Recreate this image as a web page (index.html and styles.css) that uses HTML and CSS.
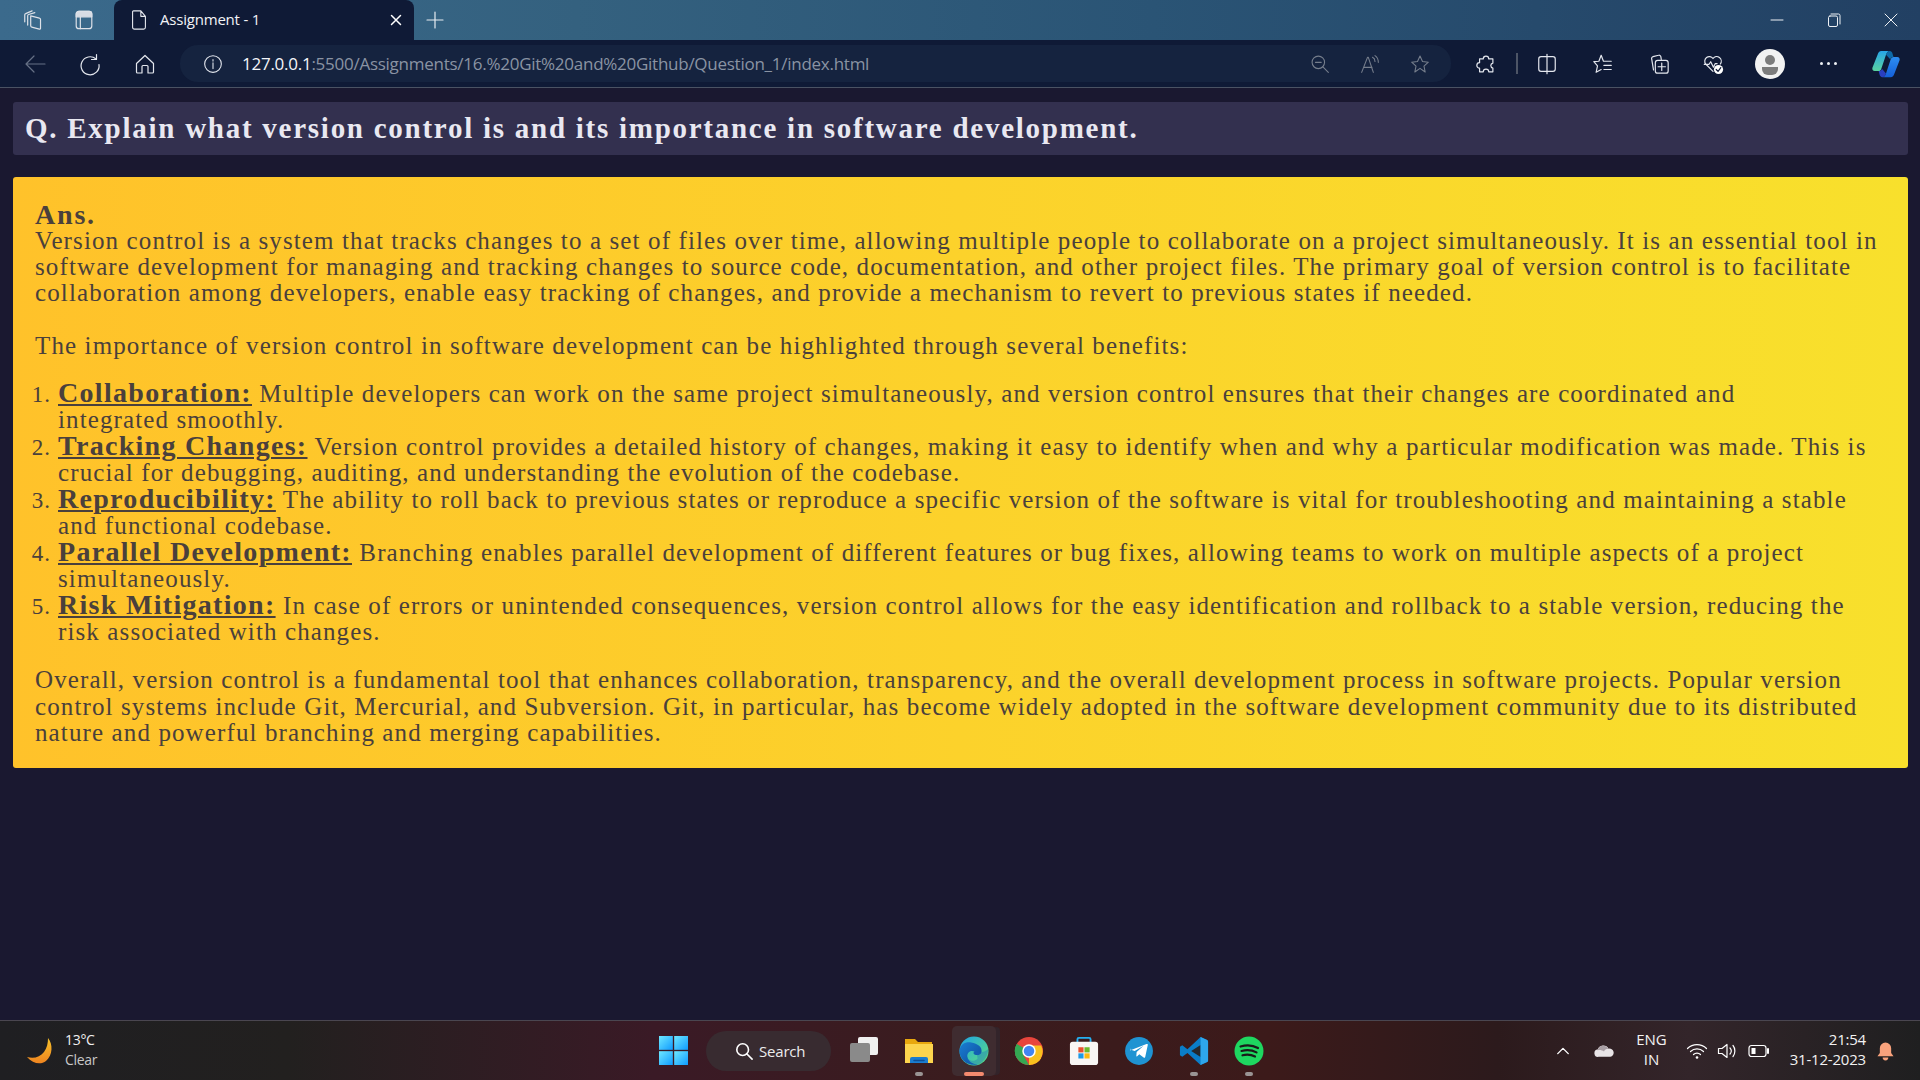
FILE: index.html
```html
<!DOCTYPE html>
<html lang="en">
<head>
<meta charset="utf-8">
<title>Assignment - 1</title>
<link rel="stylesheet" href="styles.css">
</head>
<body>
<header class="tabstrip">
  <div class="tabstrip-left">
    <svg class="ic22" viewBox="0 0 24 24"><path d="M9.500 7.500l9.500 2.500a1.500 1.500 0 0 1 1.200 1.500v9.500a1 1 0 0 1-1.300 1l-8.200-2.300a1.500 1.500 0 0 1-1.200-1.500z"/><path d="M6.200 17.500V7.500a1.500 1.500 0 0 1 1-1.500L14 4"/><path d="M3 14V6.500a1.500 1.500 0 0 1 1-1.500l7-3"/></svg>
    <svg class="ic22" viewBox="0 0 24 24"><rect x="3.500" y="2.500" width="17" height="19" rx="3"/><path d="M8 8.500V21.500"/><path d="M3.500 5.500a3 3 0 0 1 3-3h11a3 3 0 0 1 3 3V8.500h-17z" fill="#d8dce4"/></svg>
  </div>
  <div class="tab">
    <svg class="ic20" viewBox="0 0 24 24"><path d="M6 2h8l5 6v12a2 2 0 0 1-2 2H7a2 2 0 0 1-2-2V3a1 1 0 0 1 1-1zM14 2v6h5"/></svg>
    <span class="tab-title">Assignment - 1</span>
    <svg class="ic-close" viewBox="0 0 12 12"><path d="M1.500 1.500l9 9M10.500 1.500l-9 9"/></svg>
  </div>
  <svg class="newtab" viewBox="0 0 18 18"><path d="M9 1v16M1 9h16"/></svg>
  <div class="winctl">
    <svg class="ic16" viewBox="0 0 16 16"><path d="M2 8h12"/></svg>
    <svg class="ic16" viewBox="0 0 16 16"><rect x="2.500" y="4" width="9" height="10.500" rx="1.500"/><path d="M5 2h7.500a1.500 1.500 0 0 1 1.500 1.500V12"/></svg>
    <svg class="ic16" viewBox="0 0 16 16"><path d="M2 2l12 12M14 2L2 14"/></svg>
  </div>
</header>
<nav class="toolbar">
  <div class="nav-group">
    <svg class="nav-ic dim" viewBox="0 0 24 24"><path d="M22 12H3M11 4l-8 8 8 8"/></svg>
    <svg class="nav-ic" viewBox="0 0 24 24"><path d="M18.500 2.500V7.500h-5"/><path d="M18 7a9 9 0 1 0 3 5.500"/></svg>
    <svg class="nav-ic" viewBox="0 0 24 24"><path d="M3.500 11.500L12 3.500l8.500 8V20a1 1 0 0 1-1 1H15v-6.500a1 1 0 0 0-1-1h-4a1 1 0 0 0-1 1V21H4.500a1 1 0 0 1-1-1z"/></svg>
  </div>
  <div class="address">
    <svg class="addr-info" viewBox="0 0 24 24"><circle cx="12" cy="12" r="10"/><path d="M12 10.500V17.500M12 6.500v2"/></svg>
    <span class="url"><b>127.0.0.1</b>:5500/Assignments/16.%20Git%20and%20Github/Question_1/index.html</span>
    <div class="addr-tools">
      <svg class="addr-ic" viewBox="0 0 24 24"><circle cx="10" cy="10" r="7.500"/><path d="M15.500 15.500l6.500 6.500M6.500 10h7"/></svg>
      <svg class="addr-ic" viewBox="0 0 24 24"><path d="M2 22L9 4h1l6 18M4.500 16h10M15 4c2 1 3 3 3 5M18 2c3 2 4 5 4 8"/></svg>
      <svg class="addr-ic" viewBox="0 0 24 24"><path d="M12 2.500l3 6.500 7 .8-5.200 4.800 1.400 7L12 17.200 5.800 21.600l1.400-7L2 9.800 9 9z"/></svg>
    </div>
  </div>
  <div class="toolbar-right">
    <svg class="tb-ic" viewBox="0 0 24 24"><path d="M5 6.500h4a3 3 0 0 1 6 0h4.500v4.500a2.800 2.800 0 0 0 0 5.500v4h-4.500a3 3 0 0 0-6 0H5v-4a3 3 0 0 1 0-6z"/></svg>
    <span class="tb-sep"></span>
    <svg class="tb-ic split" viewBox="0 0 24 24"><rect x="3" y="4" width="18" height="16" rx="2.500"/><path d="M12 1.500v21"/></svg>
    <svg class="tb-ic favs" viewBox="0 0 24 24"><path d="M10 2.500l2.500 6.500H21M13 13.500h8M13 18h8M10 2.500L7.500 9 2 9.500l4 4.500-1.500 7 5.500-3"/></svg>
    <svg class="tb-ic colls" viewBox="0 0 24 24"><path d="M6 18.500L4 6.500a2 2 0 0 1 1.500-2.500l6-1.500a2 2 0 0 1 2.500 1.500l.5 3"/><rect x="8" y="8" width="14" height="14" rx="2.500"/><path d="M15 11v8M11 15h8"/></svg>
    <svg class="tb-ic health" viewBox="0 0 24 24"><path d="M12 20L4 12a5 5 0 0 1 8-6 5 5 0 0 1 8 6M2.500 12.500h5l2-3 3 6 2-4h2"/><circle cx="18" cy="18" r="5" fill="#fff" stroke="none"/><path d="M15.500 18l2 2 3-4" stroke="#0f1a36"/></svg>
    <span class="avatar"><svg viewBox="0 0 30 30"><circle cx="15" cy="11" r="5" fill="#7c7c7c"/><path d="M7 18h16v2a6 6 0 0 1-6 6h-4a6 6 0 0 1-6-6z" fill="#7c7c7c"/></svg></span>
    <span class="dots"><i></i><i></i><i></i></span>
    <svg class="copilot" viewBox="0 0 32 32">
      <defs>
        <linearGradient id="cpa" x1="0" y1="0" x2="0" y2="1"><stop offset="0" stop-color="#27a5e8"/><stop offset="1" stop-color="#5ad3a0"/></linearGradient>
        <linearGradient id="cpb" x1="0" y1="0" x2="0" y2="1"><stop offset="0" stop-color="#2d8df0"/><stop offset="1" stop-color="#1560d8"/></linearGradient>
      </defs>
      <path d="M11 2h9c-2 0-3 1.500-4 4l-5 15c-.5 1.500-1.500 2.500-3 2.500H4c-2 0-3-1.500-2.500-3.500L7 6c.7-2.500 2-4 4-4z" fill="url(#cpa)"/>
      <path d="M21 30h-9c2 0 3-1.500 4-4l5-15c.5-1.500 1.500-2.500 3-2.500h4c2 0 3 1.500 2.500 3.500L25 26c-.7 2.500-2 4-4 4z" fill="url(#cpb)"/>
      <path d="M16 6c1-2.500 2-4 4-4 1.500 0 2.500 1 3 3l1 3.500c-2 0-3 1-3.500 2.500z" fill="#0e6aa8"/>
      <path d="M16 26c-1 2.500-2 4-4 4-1.500 0-2.500-1-3-3l-.8-3.500c2 0 3-1 3.500-2.500z" fill="#2a3fc0"/>
    </svg>
  </div>
</nav>
<main class="page">
  <h1 class="question">Q. Explain what version control is and its importance in software development.</h1>
  <section class="answer">
    <div class="ans">Ans.</div>
    <p class="para">Version control is a system that tracks changes to a set of files over time, allowing multiple people to collaborate on a project simultaneously. It is an essential tool in<br>software development for managing and tracking changes to source code, documentation, and other project files. The primary goal of version control is to facilitate<br>collaboration among developers, enable easy tracking of changes, and provide a mechanism to revert to previous states if needed.</p>
    <p class="para gap">The importance of version control in software development can be highlighted through several benefits:</p>
    <ol class="list">
      <li><strong>Collaboration:</strong> Multiple developers can work on the same project simultaneously, and version control ensures that their changes are coordinated and<br>integrated smoothly.</li>
      <li><strong>Tracking Changes:</strong> Version control provides a detailed history of changes, making it easy to identify when and why a particular modification was made. This is<br>crucial for debugging, auditing, and understanding the evolution of the codebase.</li>
      <li><strong>Reproducibility:</strong> The ability to roll back to previous states or reproduce a specific version of the software is vital for troubleshooting and maintaining a stable<br>and functional codebase.</li>
      <li><strong>Parallel Development:</strong> Branching enables parallel development of different features or bug fixes, allowing teams to work on multiple aspects of a project<br>simultaneously.</li>
      <li><strong>Risk Mitigation:</strong> In case of errors or unintended consequences, version control allows for the easy identification and rollback to a stable version, reducing the<br>risk associated with changes.</li>
    </ol>
    <p class="para">Overall, version control is a fundamental tool that enhances collaboration, transparency, and the overall development process in software projects. Popular version<br>control systems include Git, Mercurial, and Subversion. Git, in particular, has become widely adopted in the software development community due to its distributed<br>nature and powerful branching and merging capabilities.</p>
  </section>
</main>
<footer class="taskbar">
  <div class="weather">
    <svg class="moon" viewBox="0 0 28 28">
      <defs><linearGradient id="mn" x1="0" y1="0" x2="0" y2="1"><stop offset="0" stop-color="#f7c22a"/><stop offset="1" stop-color="#ee8420"/></linearGradient></defs>
      <path d="M22 1c5 6 5 17-2 23-5 4-13 3-19-4 7 2 13 0 17-5 3-4 4-9 4-14z" fill="url(#mn)"/>
    </svg>
    <div class="weather-text"><span>13°C</span><span class="clear">Clear</span></div>
  </div>
  <div class="task-center">
    <svg class="tk-start" viewBox="0 0 30 30">
      <defs><linearGradient id="wn" x1="0" y1="0" x2="1" y2="1"><stop offset="0" stop-color="#6ee8ff"/><stop offset="1" stop-color="#0f9bff"/></linearGradient></defs>
      <rect x="0" y="0" width="14.300" height="14.300" fill="url(#wn)"/><rect x="15.700" y="0" width="14.300" height="14.300" fill="url(#wn)"/><rect x="0" y="15.700" width="14.300" height="14.300" fill="url(#wn)"/><rect x="15.700" y="15.700" width="14.300" height="14.300" fill="url(#wn)"/>
    </svg>
    <div class="search">
      <svg class="search-ic" viewBox="0 0 20 20"><circle cx="8.500" cy="8.500" r="6.500"/><path d="M13 13l6 6"/></svg>
      <span>Search</span>
    </div>
    <svg class="tk-view" viewBox="0 0 30 30"><rect x="9" y="1" width="20" height="18" rx="2" fill="#f0f0f0"/><rect x="1" y="7" width="20" height="19" rx="2" fill="#8a8a8a"/></svg>
    <div class="tk-app run">
      <svg viewBox="0 0 30 28"><path d="M1 2h10l3 3h14v21H1z" fill="#e8a80e"/><path d="M1 7h28v19H1z" fill="#fcd54e"/><path d="M6 22a2 2 0 0 1 2-2h14a2 2 0 0 1 2 2v4H6z" fill="#1a7dd0"/><path d="M10 23.500h10" stroke="#0c4f96" stroke-width="1.500"/></svg>
    </div>
    <div class="tk-app active">
      <svg viewBox="0 0 32 32">
        <defs>
          <linearGradient id="eg1" x1="0" y1="0" x2="1" y2="1"><stop offset="0" stop-color="#1da3e8"/><stop offset="1" stop-color="#5fe07a"/></linearGradient>
          <linearGradient id="eg2" x1="0" y1="0" x2="1" y2="1"><stop offset="0" stop-color="#1a7fd2"/><stop offset="1" stop-color="#0d4a9c"/></linearGradient>
        </defs>
        <circle cx="16" cy="16" r="15.500" fill="url(#eg1)"/>
        <path d="M.5 16C1 8 8 6 13 7c7 1 12 5 11 10-.5 3-4 4-7 3-2-.6-2-3-.5-3.500-4-2-8.500 1-7.500 6 .8 4 5 8 11 8C9 32 1 26 .5 16z" fill="url(#eg2)"/>
        <path d="M18 17c3 1.500 9 .5 12-2 2-2 1-1 1 1-1 9-9 15.500-15.500 15.500-5-1-8-5-7-10 0 4 7 7 11 3 1-1-1-6-1.500-7.500z" fill="#1666c0" opacity=".35"/>
      </svg>
    </div>
    <div class="tk-app">
      <svg viewBox="0 0 32 32">
        <circle cx="16" cy="16" r="15" fill="#e8453c"/>
        <path d="M16 16L29 23.500A15 15 0 0 1 16 31z" fill="#f9c01e"/>
        <path d="M16 16L3 23.500A15 15 0 0 1 3 8.500z" fill="#34a853"/>
        <path d="M16 10h13a15 15 0 0 1-2 16L16 31l5-8z" fill="#f9c01e"/>
        <path d="M3 8.500L11 22l5 9A15 15 0 0 1 3 8.500z" fill="#34a853"/>
        <circle cx="16" cy="16" r="7.200" fill="#fff"/><circle cx="16" cy="16" r="5.600" fill="#4285f4"/>
      </svg>
    </div>
    <div class="tk-app">
      <svg viewBox="0 0 30 32">
        <path d="M8 7V3.500A1.500 1.500 0 0 1 9.500 2h11A1.500 1.500 0 0 1 22 3.500V7" fill="none" stroke="#25b0f0" stroke-width="2"/>
        <rect y="6" width="30" height="25" rx="3" fill="#f8f6f4"/>
        <rect x="9" y="12" width="5.500" height="5.500" fill="#e8502e"/><rect x="15.500" y="12" width="5.500" height="5.500" fill="#6cba2c"/><rect x="9" y="18.500" width="5.500" height="5.500" fill="#1d9ae6"/><rect x="15.500" y="18.500" width="5.500" height="5.500" fill="#fcb912"/>
      </svg>
    </div>
    <div class="tk-app">
      <svg viewBox="0 0 28 28">
        <circle cx="14" cy="14" r="13" fill="#1f93d2"/>
        <path d="M5.500 13.500L21 7.500c.8-.3 1.400.1 1.200 1l-2.400 11c-.2.800-.8 1-1.500.6l-4-3-2 1.800c-.3.300-.8.300-.8-.2l.3-3.700 6.500-6-8.300 5-3.500-1.100c-.7-.3-.7-.9 0-1.400z" fill="#fff"/>
      </svg>
    </div>
    <div class="tk-app run">
      <svg viewBox="0 0 32 32">
        <path d="M23 1l7 3.300c.6.300 1 1 1 1.700v20c0 .7-.4 1.400-1 1.700L23 31 9 18l-5.500 4.200L1 20.500v-9L3.500 9.800 9 14z" fill="#0a7dc8"/>
        <path d="M23 9.500L13 16l10 6.500z" fill="#26282c"/>
        <path d="M23 1l7 3.300c.6.300 1 1 1 1.700v20c0 .7-.4 1.400-1 1.700L23 31z" fill="#2ea6ec"/>
      </svg>
    </div>
    <div class="tk-app run">
      <svg viewBox="0 0 30 30">
        <circle cx="15" cy="15" r="14.500" fill="#1ed760"/>
        <path class="sp" d="M6.500 10.500c6-1.800 12.500-1.300 17.500 1.500M7.500 15c5-1.400 10.500-1 15 1.400M8.500 19.300c4.300-1 8.500-.8 12.500 1.200"/>
      </svg>
    </div>
  </div>
  <div class="tray">
    <svg class="tray-chev" viewBox="0 0 16 10"><path d="M2 8l6-6 6 6"/></svg>
    <svg class="tray-cloud" viewBox="0 0 22 14"><path d="M5 14a4 4 0 0 1-1-8 6.500 6.500 0 0 1 12-1 4.500 4.500 0 0 1 2 9z" fill="#e8e4e6"/><path d="M4 7a6.500 6.500 0 0 1 12-2c-3 0-4 1-5 3-2-1-5-2-7-1z" fill="#a89ea4"/></svg>
    <div class="lang"><span>ENG</span><span>IN</span></div>
    <svg class="tray-ic" viewBox="0 0 22 18"><path d="M1.500 6.500a13.500 13.500 0 0 1 19 0M4.500 9.500a9.500 9.500 0 0 1 13 0M7.500 12.500a5 5 0 0 1 7 0"/><circle cx="11" cy="15.500" r="1.300" fill="#fff" stroke="none"/></svg>
    <svg class="tray-ic" viewBox="0 0 22 18"><path d="M1.500 6.500h3.500L10 2.500v13L5 11.500H1.500zM13 6c1.500 1.700 1.500 4.300 0 6M16 3.500c2.500 3 2.500 8 0 11"/></svg>
    <svg class="tray-ic" viewBox="0 0 22 18"><rect x="1" y="3.500" width="17" height="11" rx="2.500"/><rect x="3.500" y="6" width="4" height="6" fill="#fff" stroke="none"/><path d="M20 7v4" stroke-width="2"/></svg>
    <div class="clock"><span>21:54</span><span>31-12-2023</span></div>
    <svg class="tray-bell" viewBox="0 0 18 20"><path d="M9 1a6 6 0 0 1 6 6v5l2.500 3.500H.5L3 12V7a6 6 0 0 1 6-6z" fill="#f9a27c"/><path d="M6 17h6a3 3 0 0 1-6 0z" fill="#f9a27c"/></svg>
  </div>
</footer>
</body>
</html>
```
FILE: styles.css
```css
* { box-sizing: border-box; }
html, body { margin: 0; height: 100%; }
body {
  width: 1920px;
  height: 1080px;
  display: flex;
  flex-direction: column;
  overflow: hidden;
  background: #1a1830;
  font-family: "Open Sans", "Noto Sans", sans-serif;
  color: #fff;
}
svg { display: block; flex: none; fill: none; stroke: #e4e7ee; stroke-width: 1.500; stroke-linecap: round; stroke-linejoin: round; }

/* Tab strip */
.tabstrip {
  height: 40px;
  flex: none;
  display: flex;
  align-items: flex-end;
  background: linear-gradient(90deg, #3b6a8c 0%, #34617f 30%, #2a5475 60%, #224063 100%);
  padding-left: 22px;
}
.tabstrip-left { display: flex; gap: 29px; align-self: center; width: 92px; }
.ic22 { width: 22px; height: 22px; stroke: #dde1e8; stroke-width: 1.300; }
.tab {
  width: 300px;
  height: 40px;
  background: #0f1a36;
  border-radius: 8px 8px 0 0;
  display: flex;
  align-items: center;
  padding: 0 12px 0 14px;
}
.ic20 { width: 22px; height: 22px; stroke: #e4e7ee; stroke-width: 1.200; }
.tab-title { font-size: 15px; letter-spacing: -0.200px; margin-left: 10px; padding-bottom: 2px; flex: 1; color: #f2f3f6; }
.ic-close { width: 12px; height: 12px; stroke: #fff; }
.newtab { width: 18px; height: 18px; margin: 0 0 11px 12px; stroke: #e8edf2; stroke-width: 1.200; }
.winctl { margin-left: auto; display: flex; gap: 41px; align-self: center; padding-right: 21px; }
.ic16 { width: 16px; height: 16px; stroke: #eef1f5; stroke-width: 1; }

/* Toolbar */
.toolbar {
  height: 48px;
  flex: none;
  display: flex;
  align-items: center;
  background: #0f1a36;
  border-bottom: 1px solid #4a5263;
  padding-left: 23px;
}
.nav-group { display: flex; gap: 31px; margin-right: 23px; }
.nav-ic { width: 24px; height: 24px; stroke-width: 1.200; }
.nav-ic.dim { stroke: #667085; }
.address {
  width: 1271px;
  height: 37px;
  border-radius: 18px;
  background: #15233f;
  display: flex;
  align-items: center;
  padding-left: 23px;
}
.addr-info { width: 20px; height: 20px; stroke-width: 1.300; }
.url { margin-left: 19px; font-size: 17px; letter-spacing: -0.260px; color: #8a93a3; white-space: nowrap; }
.url b { font-weight: 400; color: #f4f6f9; }
.addr-tools { margin-left: auto; margin-right: 21px; display: flex; gap: 30px; }
.addr-ic { width: 20px; height: 20px; stroke: #767e8c; stroke-width: 1.300; }
.toolbar-right { display: flex; align-items: center; margin-left: 24px; }
.tb-ic { width: 22px; height: 22px; stroke-width: 1.300; }
.tb-sep { width: 2px; height: 21px; background: #4d5566; margin-left: 19px; }
.split { margin-left: 18px; }
.favs { margin-left: 34px; }
.colls { margin-left: 34px; }
.health { margin-left: 32px; }
.avatar { width: 30px; height: 30px; border-radius: 50%; background: #f2f2f2; margin-left: 31px; }
.avatar svg { width: 30px; height: 30px; stroke: none; }
.dots { display: flex; gap: 4px; margin-left: 35px; }
.dots i { width: 3px; height: 3px; background: #eef1f5; border-radius: 50%; }
.copilot { width: 30px; height: 30px; margin-left: 34px; stroke: none; }

/* Page */
.page {
  flex: 1;
  min-height: 0;
  padding: 14px 12px 0 13px;
  font-family: "Liberation Serif", serif;
}
.question {
  margin: 0;
  height: 53px;
  display: flex;
  align-items: center;
  padding-left: 12px;
  background: #33304f;
  border-radius: 3px;
  color: #e9e8f1;
  font-size: 29px;
  font-weight: 700;
  letter-spacing: 1.740px;
  white-space: nowrap;
}
.answer {
  margin-top: 22px;
  height: 591px;
  padding: 24px 22px 0;
  background: linear-gradient(90deg, #ffc22a 0%, #fcd22b 50%, #f8e02c 100%);
  border-radius: 3px;
  color: #4a403c;
  font-size: 25px;
  line-height: 26.200px;
  letter-spacing: 1.120px;
  white-space: nowrap;
}
.ans { font-size: 28px; font-weight: 700; line-height: 27px; letter-spacing: 1.800px; }
.para { margin: 0; }
.gap { margin-top: 26px; }
.list { margin: 21.500px 0 22px; padding-left: 23px; }
.list li { line-height: 26px; }
.list li::marker { font-size: 23px; }
.list strong { font-size: 28px; letter-spacing: 1.300px; text-decoration: underline; text-decoration-thickness: 2px; text-underline-offset: 2px; }

/* Taskbar */
.taskbar {
  height: 60px;
  flex: none;
  display: grid;
  grid-template-columns: 1fr auto 1fr;
  align-items: center;
  border-top: 1px solid #4a4650;
  background: linear-gradient(90deg, #1f1f22 0%, #22201f 15%, #3a1a26 34%, #3a1c1e 50%, #3c1a1a 66%, #2c1a1c 78%, #33252a 88%, #1f1f20 100%);
}
.weather { display: flex; align-items: center; padding-left: 26px; gap: 11px; }
.moon { width: 28px; height: 28px; stroke: none; }
.weather-text { display: flex; flex-direction: column; font-size: 14px; line-height: 20px; padding-bottom: 2px; color: #f0f0f0; letter-spacing: -0.300px; }
.clear { color: #c8c8c8; }
.task-center { display: flex; align-items: center; padding-left: 10px; }
.tk-start { width: 29px; height: 29px; stroke: none; margin-right: 18px; }
.search {
  width: 125px;
  height: 40px;
  border-radius: 20px;
  background: #382b30;
  display: flex;
  align-items: center;
  padding-left: 29px;
  gap: 6px;
  font-size: 15px;
  color: #ececec;
  letter-spacing: -0.200px;
}
.search-ic { width: 18px; height: 18px; stroke: #fff; stroke-width: 1.800; }
.tk-view { width: 30px; height: 30px; stroke: none; margin: 0 7px 0 18px; }
.tk-app {
  width: 44px;
  height: 50px;
  margin-left: 11px;
  display: flex;
  align-items: center;
  justify-content: center;
  position: relative;
  border-radius: 5px;
}
.tk-app svg { width: 30px; height: 30px; stroke: none; }
.tk-app.run::after {
  content: "";
  position: absolute;
  bottom: 0;
  left: 18px;
  width: 8px;
  height: 3.500px;
  border-radius: 2px;
  background: #9a9494;
}
.tk-app.active { background: #3f2c30; box-shadow: 5px 0 0 -1px #33242a; }
.tk-app.active::after {
  content: "";
  position: absolute;
  bottom: 0;
  left: 12px;
  width: 20px;
  height: 3.500px;
  border-radius: 2px;
  background: #f48a6e;
}
.sp { fill: none; stroke: #1a1a1a; stroke-width: 2.200; }
.tray { display: flex; align-items: center; justify-content: flex-end; padding-right: 26px; }
.tray-chev { width: 14px; height: 10px; stroke: #fff; stroke-width: 1.600; }
.tray-cloud { width: 20px; height: 13px; stroke: none; margin-left: 24px; }
.lang { display: flex; flex-direction: column; align-items: center; font-size: 15px; line-height: 20px; padding-bottom: 3px; margin: 0 19px 0 22px; color: #f2f2f2; }
.tray-ic { width: 22px; height: 18px; stroke: #fff; stroke-width: 1.200; margin-right: 9px; }
.clock { display: flex; flex-direction: column; align-items: flex-end; font-size: 15px; line-height: 20px; padding-bottom: 3px; margin-left: 11px; color: #f2f2f2; letter-spacing: -0.200px; }
.tray-bell { width: 17px; height: 20px; stroke: none; margin-left: 11px; }
```
